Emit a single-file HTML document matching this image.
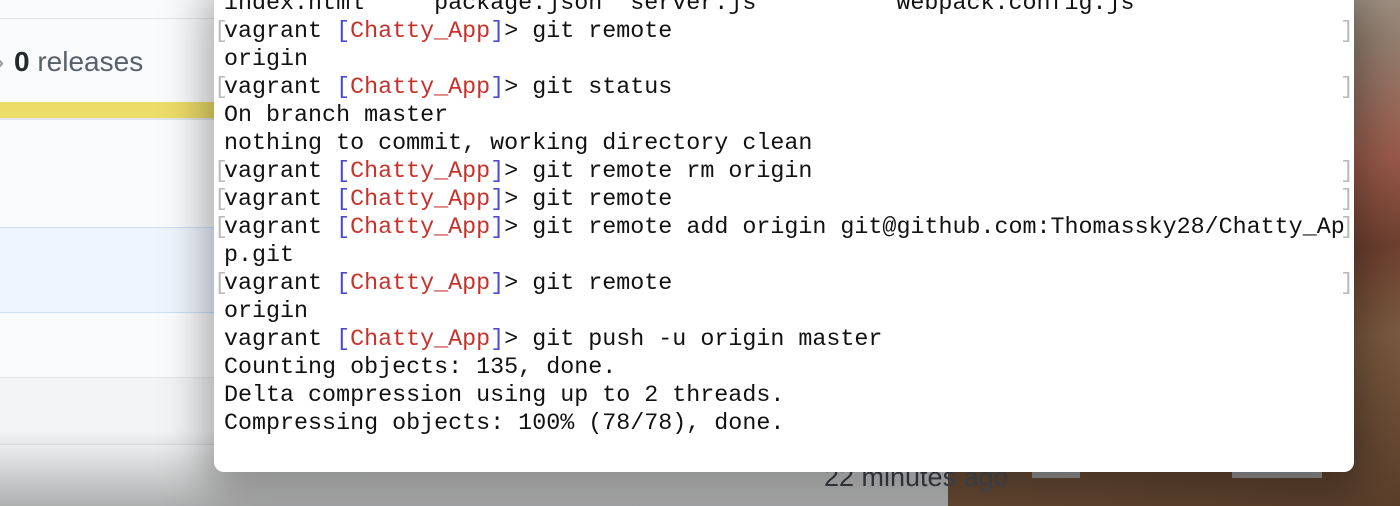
<!DOCTYPE html>
<html><head><style>
html,body{margin:0;padding:0}
body{width:1400px;height:506px;position:relative;overflow:hidden;background:#fafbfc;font-family:"Liberation Sans",sans-serif}
.desert{position:absolute;left:948px;top:0;width:452px;height:506px;background:linear-gradient(170deg,#b4aea6 0%,#948070 20%,#9a5a4a 40%,#6e4030 55%,#7a5a40 70%,#5a3e2a 100%)}
.shade{position:absolute;left:0;top:0;width:948px;height:506px;background:linear-gradient(180deg,rgba(0,0,0,0) 0%,rgba(0,0,0,0) 85%,rgba(0,0,0,.3) 100%)}
.term{position:absolute;left:214px;top:-12px;width:1140px;height:484px;background:#fff;border-radius:0 0 10px 10px;box-shadow:0 12px 45px 8px rgba(0,0,0,.35);font-family:"Liberation Mono",monospace;font-size:23.35px;line-height:28px;color:#111;white-space:pre}
.lines{position:absolute;left:10px;top:2px}
.b{color:#4b4bd6}.r{color:#c6322a}
.br{position:absolute;color:#bbb}
</style></head><body>
<div class="desert"></div>
<div style="position:absolute;left:0;top:0;width:948px;height:506px;background:#fafbfc"></div>
<div style="position:absolute;left:0;top:18px;width:948px;height:1px;background:#e1e4e8"></div>
<div style="position:absolute;left:0;top:62px;font-size:28px;color:#586069;line-height:0"><span style="position:absolute;top:0;left:-5px;color:#999">›</span><span style="position:absolute;left:14px;top:0;white-space:nowrap"><b style="color:#24292e">0</b> releases</span></div>
<div style="position:absolute;left:0;top:102px;width:948px;height:16px;background:#ecdc68"></div>
<div style="position:absolute;left:0;top:118px;width:948px;height:2px;background:#e1e4e8"></div>
<div style="position:absolute;left:0;top:227px;width:948px;height:84px;background:#eef5fe;border-top:1px solid #c8e1ff;border-bottom:1px solid #c8e1ff"></div>
<div style="position:absolute;left:0;top:377px;width:948px;height:66px;background:#f3f4f6;border-top:1px solid #e1e4e8;border-bottom:1px solid #e1e4e8"></div>
<div style="position:absolute;left:824px;top:462px;font-size:27px;color:#4a5058;white-space:nowrap">22 minutes ago</div>
<div class="shade"></div>
<div style="position:absolute;left:1032px;top:472px;width:48px;height:6px;background:#999"></div>
<div style="position:absolute;left:1232px;top:472px;width:90px;height:6px;background:#999"></div>
<div class="term"><div class="lines">index.html     package.json  server.js          webpack.config.js
vagrant <span class="b">[</span><span class="r">Chatty_App</span><span class="b">]</span>&gt; git remote
origin
vagrant <span class="b">[</span><span class="r">Chatty_App</span><span class="b">]</span>&gt; git status
On branch master
nothing to commit, working directory clean
vagrant <span class="b">[</span><span class="r">Chatty_App</span><span class="b">]</span>&gt; git remote rm origin
vagrant <span class="b">[</span><span class="r">Chatty_App</span><span class="b">]</span>&gt; git remote
vagrant <span class="b">[</span><span class="r">Chatty_App</span><span class="b">]</span>&gt; git remote add origin git@github.com:Thomassky28/Chatty_Ap
p.git
vagrant <span class="b">[</span><span class="r">Chatty_App</span><span class="b">]</span>&gt; git remote
origin
vagrant <span class="b">[</span><span class="r">Chatty_App</span><span class="b">]</span>&gt; git push -u origin master
Counting objects: 135, done.
Delta compression using up to 2 threads.
Compressing objects: 100% (78/78), done.</div>
<div class="br" style="left:0;top:30px">[</div><div class="br" style="left:1126px;top:30px">]</div>
<div class="br" style="left:0;top:86px">[</div><div class="br" style="left:1126px;top:86px">]</div>
<div class="br" style="left:0;top:170px">[</div><div class="br" style="left:1126px;top:170px">]</div>
<div class="br" style="left:0;top:198px">[</div><div class="br" style="left:1126px;top:198px">]</div>
<div class="br" style="left:0;top:226px">[</div><div class="br" style="left:1126px;top:226px">]</div>
<div class="br" style="left:0;top:282px">[</div><div class="br" style="left:1126px;top:282px">]</div>
</div>
</body></html>
